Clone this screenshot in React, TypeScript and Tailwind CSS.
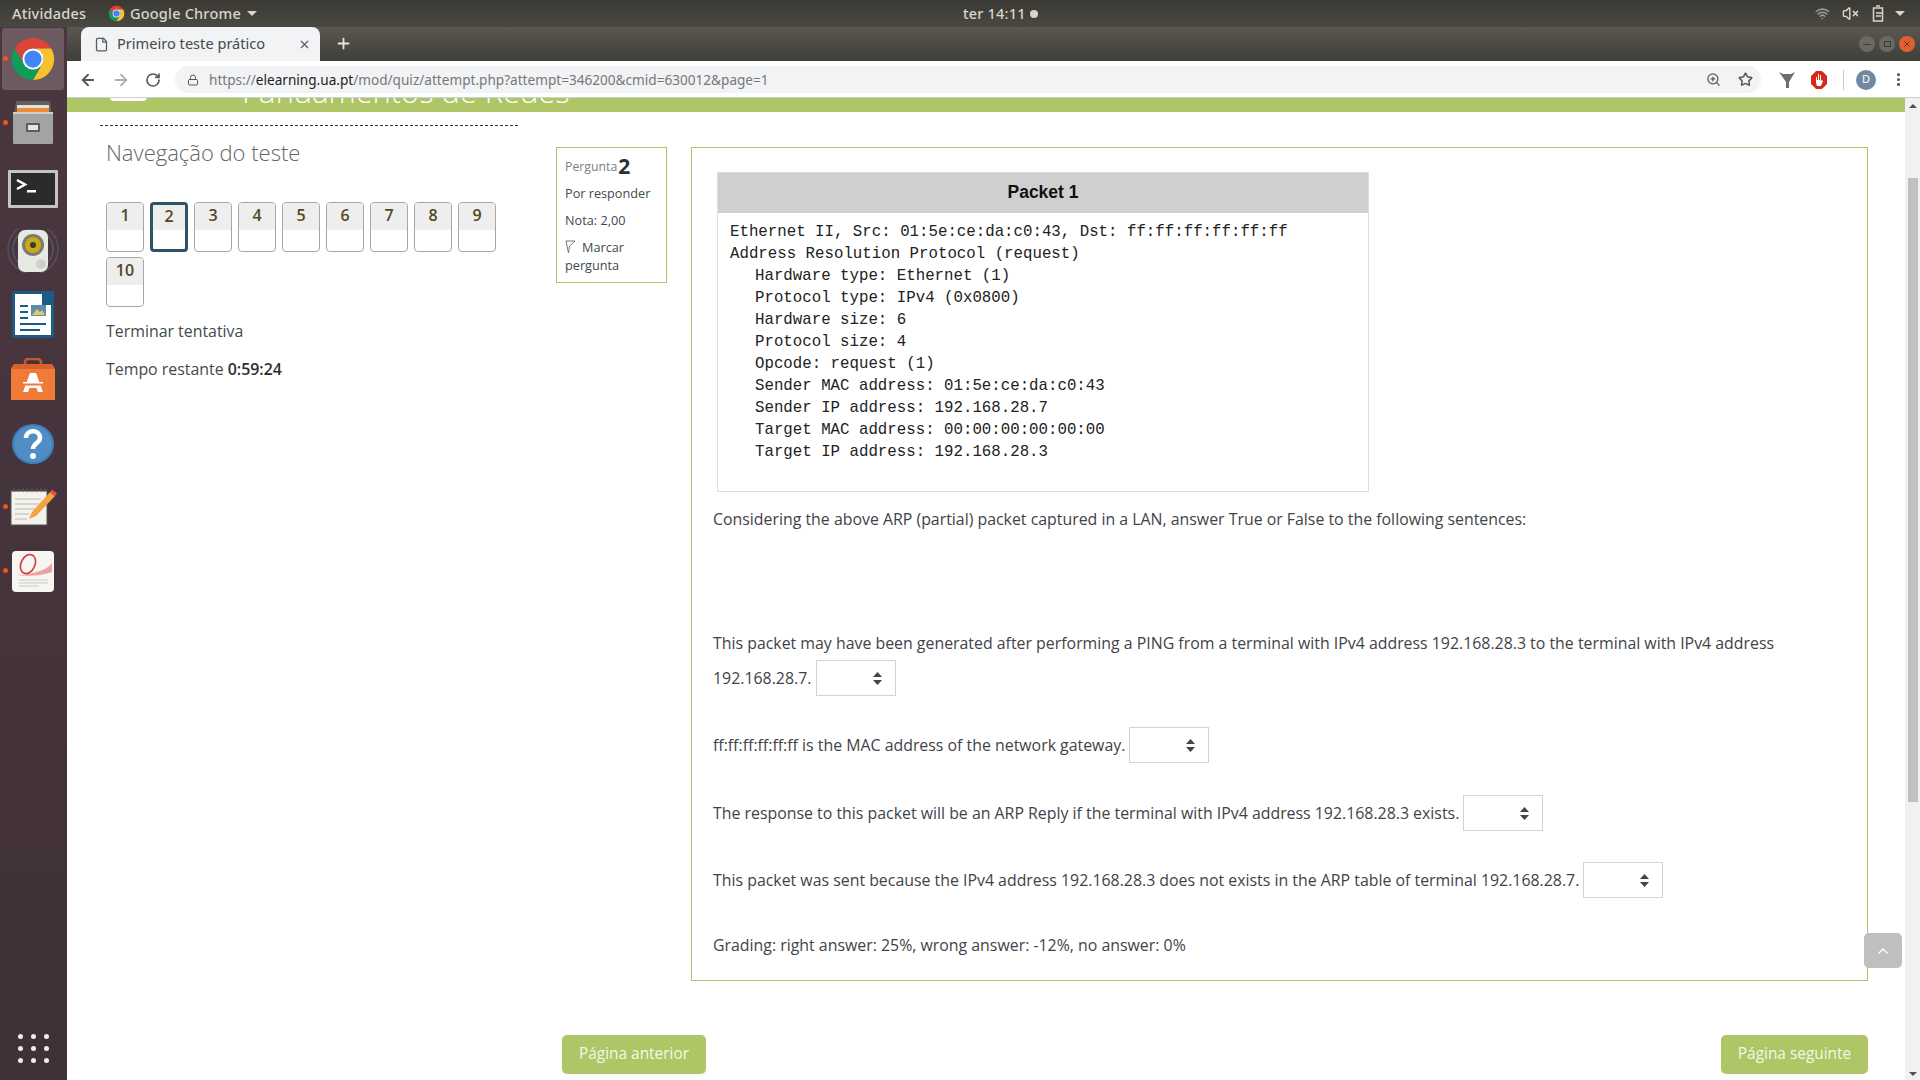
import { ArrowLeft, ArrowRight, ChevronUp, File, Lock, MoreVertical, Plus, RotateCw, Star, VolumeX, Wifi, X, ZoomIn } from "lucide-react";

const packetLines = [
  { text: "Ethernet II, Src: 01:5e:ce:da:c0:43, Dst: ff:ff:ff:ff:ff:ff", indent: false },
  { text: "Address Resolution Protocol (request)", indent: false },
  { text: "Hardware type: Ethernet (1)", indent: true },
  { text: "Protocol type: IPv4 (0x0800)", indent: true },
  { text: "Hardware size: 6", indent: true },
  { text: "Protocol size: 4", indent: true },
  { text: "Opcode: request (1)", indent: true },
  { text: "Sender MAC address: 01:5e:ce:da:c0:43", indent: true },
  { text: "Sender IP address: 192.168.28.7", indent: true },
  { text: "Target MAC address: 00:00:00:00:00:00", indent: true },
  { text: "Target IP address: 192.168.28.3", indent: true },
];

const ChromeLogo = ({ size }: { size: number }) => (
  <svg width={size} height={size} viewBox="0 0 48 48">
    <path fill="#DB4437" d="M4.95 13A22 22 0 0 1 43.05 13H24A11 11 0 0 0 14.47 29.5Z" />
    <path fill="#FBC02D" d="M43.05 13A22 22 0 0 1 24 46L33.5 29.5A11 11 0 0 0 24 13Z" />
    <path fill="#0F9D58" d="M24 46A22 22 0 0 1 4.95 13L14.47 29.5A11 11 0 0 0 33.5 29.5Z" />
    <circle cx="24" cy="24" r="11" fill="#fff" />
    <circle cx="24" cy="24" r="9" fill="#4285F4" />
  </svg>
);

const FilesIcon = () => (
  <svg width="44" height="44" viewBox="0 0 44 44">
    <path fill="#5f5f62" d="M5 0h34l2 14H3z" />
    <rect x="6" y="4" width="32" height="9" fill="#e9e2d2" />
    <rect x="6" y="7" width="32" height="4" fill="#ee8a3c" />
    <rect x="2" y="11" width="40" height="32" rx="1.5" fill="#a3a3a3" />
    <rect x="2" y="11" width="40" height="2" fill="#cfcfcf" />
    <rect x="15" y="22" width="14" height="9" rx="1" fill="#5c5c5c" />
    <rect x="17" y="24" width="10" height="5" fill="#e6e6e6" />
  </svg>
);

const TerminalIcon = () => (
  <svg width="50" height="38" viewBox="0 0 50 38">
    <rect width="50" height="38" rx="1" fill="#c4c4c0" />
    <rect x="3" y="3" width="44" height="32" fill="#2b2b2b" />
    <path d="M9 10l8 4.500-8 4.500" fill="none" stroke="#fff" strokeWidth="2.500" />
    <rect x="19" y="20" width="9" height="2.500" fill="#fff" />
  </svg>
);

const SpeakerIcon = () => (
  <svg width="52" height="44" viewBox="0 0 52 44">
    <circle cx="26" cy="20" r="25" fill="none" stroke="#5d6b85" strokeWidth="1.500" opacity="0.5" />
    <circle cx="26" cy="20" r="20" fill="none" stroke="#5d6b85" strokeWidth="1.500" opacity="0.6" />
    <rect x="11" y="1" width="30" height="42" rx="7" fill="#e9e9e4" />
    <circle cx="26" cy="16" r="11" fill="#7b7a72" />
    <circle cx="26" cy="16" r="8" fill="#c9a915" />
    <circle cx="26" cy="16" r="3" fill="#3b3a33" />
    <circle cx="34" cy="35" r="5" fill="#cfcfca" />
  </svg>
);

const WriterIcon = () => (
  <svg width="44" height="48" viewBox="0 0 44 48">
    <path fill="#1c5b86" d="M2 0h30l11 11v33a3 3 0 0 1-3 3H4a3 3 0 0 1-3-3V2z" />
    <path fill="#fff" d="M4 3h27v11h9v30H4z" />
    <path fill="#1c5b86" d="M31 0h12v11z" />
    <path stroke="#1c5b86" strokeWidth="2.200" d="M9 15h8M9 21h8M9 27h8M9 33h26M9 39h20" />
    <rect x="20" y="14" width="15" height="11" fill="#5b8db0" />
    <path fill="#e6c66a" d="M21 24l5-6 3 3 2-2 3 5z" />
  </svg>
);

const BagIcon = () => (
  <svg width="46" height="42" viewBox="0 0 46 42">
    <path d="M15 8V4a3 3 0 0 1 3-3h10a3 3 0 0 1 3 3v4" fill="none" stroke="#c8582a" strokeWidth="2.500" />
    <path fill="#f07a38" d="M4 6h38l3 5v31H1V11z" />
    <path fill="#d9622b" d="M1 11l3-5h38l3 5z" />
    <path fill="#fff" d="M20 15h6l7 19h-5l-1.500-4h-7L18 34h-5z" />
    <rect x="11" y="25" width="24" height="2.500" fill="#f07a38" />
    <rect x="13" y="24" width="20" height="1.500" fill="#fff" />
  </svg>
);

const HelpIcon = () => (
  <svg width="42" height="40" viewBox="0 0 42 40">
    <ellipse cx="21" cy="20" rx="21" ry="20" fill="#3f7fb9" />
    <ellipse cx="21" cy="20" rx="19" ry="18" fill="#4f8dc4" />
    <path d="M14 14c0-9 14-9 14 0 0 5-7 5-7 11" fill="none" stroke="#fff" strokeWidth="4.500" />
    <circle cx="21" cy="32" r="3" fill="#fff" />
  </svg>
);

const NotesIcon = () => (
  <svg width="48" height="40" viewBox="0 0 48 40">
    <rect x="2" y="4" width="36" height="34" fill="#f3f2ec" stroke="#55534f" strokeWidth="1" />
    <path stroke="#55534f" strokeWidth="3" strokeDasharray="2 2.500" d="M4 3h33" />
    <path stroke="#b9b7b0" strokeWidth="1.200" d="M6 12h26M6 17h24M6 22h20M6 27h14M6 32h12" />
    <path fill="#f3a33c" d="M41 5l5 4-19 20-7 3 3-7z" />
    <path fill="#d9534f" d="M41 5l2-2.500 5 4-2 2.500z" />
  </svg>
);

const EvinceIcon = () => (
  <svg width="42" height="41" viewBox="0 0 42 41">
    <rect width="42" height="41" rx="4" fill="#f6f5f2" />
    <path d="M4 24c10 0 30-3 36-12v9c-8 3-24 5-36 3z" fill="#eda3a3" />
    <ellipse cx="16" cy="13" rx="7" ry="10" fill="none" stroke="#d43a3a" strokeWidth="1.600" transform="rotate(25 16 13)" />
    <path stroke="#c9c9c6" strokeWidth="1.200" d="M7 29h29M7 32h29M7 35h20" />
  </svg>
);

const dockItems = [
  { icon: <ChromeLogo size={46} />, dot: true, active: true, shift: "" },
  { icon: <FilesIcon />, dot: true, active: false, shift: "" },
  { icon: <TerminalIcon />, dot: false, active: false, shift: "mt-[3px]" },
  { icon: <SpeakerIcon />, dot: false, active: false, shift: "" },
  { icon: <WriterIcon />, dot: false, active: false, shift: "" },
  { icon: <BagIcon />, dot: false, active: false, shift: "" },
  { icon: <HelpIcon />, dot: false, active: false, shift: "mt-[2px]" },
  { icon: <NotesIcon />, dot: true, active: false, shift: "" },
  { icon: <EvinceIcon />, dot: true, active: false, shift: "" },
];

const Dock = () => (
  <aside className="w-[67px] shrink-0 flex flex-col items-center bg-gradient-to-b from-[#4b3640] to-[#3f3136]">
    {dockItems.map((item, i) => (
      <div key={i} className="relative w-full h-[64px] pr-[1px] flex items-center justify-center">
        {item.active && <div className="absolute left-[2px] right-[3px] top-[1px] bottom-[1px] rounded-[3px] bg-[#6d5a60]" />}
        {item.dot && <div className="absolute left-[3px] top-[29px] w-[5px] h-[5px] rounded-full bg-[#e95420]" />}
        <div className={`relative ${item.shift}`}>{item.icon}</div>
      </div>
    ))}
    <div className="mt-auto mb-[17px] grid grid-cols-3 gap-x-[8px] gap-y-[7px]">
      {Array.from({ length: 9 }).map((_, i) => (
        <div key={i} className="w-[5px] h-[5px] rounded-full bg-[#eeeeee]" />
      ))}
    </div>
  </aside>
);

const TopBar = () => (
  <header className="h-[27px] shrink-0 flex items-center bg-gradient-to-b from-[#3a3934] to-[#4a4842] text-[#d8d5cd] text-[14.5px] font-medium tracking-[0.2px] font-['Noto_Sans',sans-serif]">
    <span className="ml-[12px] w-[96px]">Atividades</span>
    <ChromeLogo size={17} />
    <span className="ml-[5px]">Google Chrome</span>
    <span className="ml-[6px] w-0 h-0 border-x-[5px] border-x-transparent border-t-[5px] border-t-[#d8d5cd]" />
    <div className="ml-[706px] flex items-center gap-[4px]">
      <span>ter 14:11</span>
      <span className="w-[8px] h-[8px] rounded-full bg-[#d8d5cd]" />
    </div>
    <div className="ml-auto mr-[15px] flex items-center gap-[12px]">
      <Wifi size={15} strokeWidth={2.500} className="text-[#9b9a94]" />
      <VolumeX size={17} className="text-[#d8d5cd]" />
      <svg className="ml-[1px]" width="14" height="17" viewBox="0 0 14 17" fill="none" stroke="#d8d5cd" strokeWidth="1.500">
        <path d="M4 1h4M1.500 3h9v13h-9z" />
        <path d="M4 8h6M4 11h5" />
      </svg>
      <span className="ml-[-3px] w-0 h-0 border-x-[5px] border-x-transparent border-t-[5px] border-t-[#d8d5cd]" />
    </div>
  </header>
);

const TabBar = () => (
  <div className="h-[34px] shrink-0 flex items-end bg-gradient-to-b from-[#5b5850] to-[#3f3e39] font-['Noto_Sans',sans-serif]">
    <div className="ml-[14px] w-[239px] h-[34px] flex items-center rounded-t-[8px] bg-[#f1f3f4] text-[#45494d] text-[14.6px]">
      <File size={15} className="ml-[13px] text-[#55585c]" />
      <span className="ml-[8px]">Primeiro teste prático</span>
      <X size={13} className="ml-auto mr-[9px] text-[#55585c]" />
    </div>
    <Plus size={17} strokeWidth={2.500} className="ml-[15px] mb-[9px] text-[#e8e6e0]" />
    <div className="ml-auto mr-[5px] mb-[9px] flex items-center gap-[4px]">
      <span className="w-[16px] h-[16px] rounded-full bg-[#6b6964] flex items-center justify-center">
        <span className="w-[8px] h-[1px] bg-[#3c3b37]" />
      </span>
      <span className="w-[16px] h-[16px] rounded-full bg-[#6b6964] flex items-center justify-center">
        <span className="w-[7px] h-[6px] border border-[#3c3b37]" />
      </span>
      <span className="w-[16px] h-[16px] rounded-full bg-[#e0602e] flex items-center justify-center">
        <X size={10} className="text-[#5a2a14]" />
      </span>
    </div>
  </div>
);

const Toolbar = () => (
  <div className="h-[37px] shrink-0 flex items-center pt-[1px] bg-[#ffffff] border-b border-[#d0d0d0] font-['Noto_Sans',sans-serif]">
    <ArrowLeft size={18} strokeWidth={2.500} className="ml-[12px] text-[#55585c]" />
    <ArrowRight size={18} strokeWidth={2.500} className="ml-[15px] text-[#aeb0b3]" />
    <RotateCw size={16} strokeWidth={2.500} className="ml-[15px] text-[#55585c]" />
    <div className="ml-[14px] w-[1586px] h-[27px] flex items-center rounded-full bg-[#f1f3f4] text-[13.6px] text-[#75787c]">
      <Lock size={12} className="ml-[12px] text-[#55585c]" />
      <span className="ml-[10px] pt-[2px]">
        https://<span className="text-[#202124]">elearning.ua.pt</span>/mod/quiz/attempt.php?attempt=346200&amp;cmid=630012&amp;page=1
      </span>
      <ZoomIn size={15} className="ml-auto text-[#55585c]" />
      <Star size={15} strokeWidth={2.500} className="ml-[17px] mr-[8px] text-[#55585c]" />
    </div>
    <svg className="ml-[18px]" width="16" height="18" viewBox="0 0 16 18">
      <path fill="#6b6e72" d="M0 1l4 2h8l4-2-6 10v6H7v-6z" />
    </svg>
    <svg className="ml-[16px]" width="16" height="18" viewBox="0 0 16 18">
      <path fill="#d32a1a" d="M5 0h6l5 5v8l-5 5H5l-5-5V5z" />
      <path fill="#fff" d="M5 6h1v3h1V3h1v6h1V4h1v6l1-1 1 1-2 5H6l-1-3z" />
    </svg>
    <div className="ml-[16px] w-[1px] h-[20px] bg-[#c8c8c8]" />
    <div className="ml-[12px] w-[20px] h-[20px] rounded-full bg-[#6f8aa0] flex items-center justify-center text-[11px] text-white">D</div>
    <MoreVertical size={17} strokeWidth={2.500} className="ml-[14px] text-[#55585c]" />
  </div>
);

const SelectBox = () => (
  <span className="relative inline-block align-[-12px] w-[80px] h-[36px] bg-white border border-[#ced4da]">
    <svg className="absolute right-[13px] top-[11px]" width="9" height="13" viewBox="0 0 9 13">
      <path fill="#444" d="M4.500 0L9 5H0zM4.500 13L0 8h9z" />
    </svg>
  </span>
);

const PacketFigure = () => (
  <div className="ml-[4px] w-[652px] h-[320px] border border-[#dddddd]">
    <div className="h-[40px] pb-[2px] bg-[#cfcfcf] flex items-center justify-center text-[17.5px] font-bold text-[#111] font-['Liberation_Sans',sans-serif]">Packet 1</div>
    <div className="pt-[8px] pl-[12px] text-[15.75px] leading-[22px] text-[#222] font-['Liberation_Mono',monospace]">
      {packetLines.map((line) => (
        <div key={line.text} className={line.indent ? "pl-[25px]" : ""}>{line.text}</div>
      ))}
    </div>
  </div>
);

const QuizNav = () => (
  <div className="w-[489px] shrink-0 pl-[33px]">
    <div className="w-[418px] border-t border-dashed border-[#333] mt-[13px]" />
    <h2 className="ml-[6px] mt-[10px] text-[22px] leading-[32px] font-light text-[#5f6668]">Navegação do teste</h2>
    <div className="ml-[6px] mt-[34px] w-[400px] flex flex-wrap gap-x-[6px] gap-y-[5px]">
      {Array.from({ length: 10 }).map((_, i) => (
        <div
          key={i}
          className={`w-[38px] h-[50px] rounded-[4px] overflow-hidden bg-white ${i === 1 ? "border-[3px] border-[#2e5266]" : "border border-[#a6a6a6]"}`}
        >
          <div className={`bg-[#eeeeee] text-center font-semibold text-[16px] text-[#51491f] ${i === 1 ? "h-[25px] leading-[23px]" : "h-[27px] leading-[25px]"}`}>{i + 1}</div>
        </div>
      ))}
    </div>
    <div className="ml-[6px] mt-[12px] text-[15.9px] leading-[24px] text-[#3f4a4f]">Terminar tentativa</div>
    <div className="ml-[6px] mt-[14px] text-[15.9px] leading-[24px] text-[#3f4a4f]">
      Tempo restante <span className="font-semibold text-[#2b2f33]">0:59:24</span>
    </div>
  </div>
);

const QuestionInfo = () => (
  <div className="w-[111px] h-[136px] shrink-0 border border-[#aec665] pl-[8px] text-[12.7px] text-[#3f4a4f]">
    <div className="h-[37px] flex items-center">
      <span className="pt-[2px] text-[12.3px] text-[#7c7f80]">Pergunta</span>
      <span className="ml-[1px] text-[21px] font-bold text-[#2b2f33]">2</span>
    </div>
    <div className="leading-[18px] mt-[-1px]">Por responder</div>
    <div className="leading-[18px] mt-[9px]">Nota: 2,00</div>
    <div className="leading-[18px] mt-[9px] flex items-center">
      <svg width="11" height="14" viewBox="0 0 11 14" fill="none" stroke="#777" strokeWidth="1">
        <path d="M1 1h9L4.500 6 3.500 13z" />
      </svg>
      <span className="ml-[6px]">Marcar</span>
    </div>
    <div className="leading-[18px]">pergunta</div>
  </div>
);

const QuestionBody = () => (
  <div className="relative w-[1177px] h-[834px] shrink-0 border border-[#aec665] pt-[24px] pl-[21px] text-[15.88px] text-[#3f4347]">
    <PacketFigure />
    <p className="mt-[10px] leading-[34px]">Considering the above ARP (partial) packet captured in a LAN, answer True or False to the following sentences:</p>
    <p className="mt-[90px] leading-[34px]">
      This packet may have been generated after performing a PING from a terminal with IPv4 address 192.168.28.3 to the terminal with IPv4 address 192.168.28.7. <SelectBox />
    </p>
    <p className="mt-[31px] leading-[34px]">
      ff:ff:ff:ff:ff:ff is the MAC address of the network gateway. <SelectBox />
    </p>
    <p className="mt-[32px] leading-[34px]">
      The response to this packet will be an ARP Reply if the terminal with IPv4 address 192.168.28.3 exists. <SelectBox />
    </p>
    <p className="mt-[31px] leading-[34px]">
      This packet was sent because the IPv4 address 192.168.28.3 does not exists in the ARP table of terminal 192.168.28.7. <SelectBox />
    </p>
    <p className="mt-[30px] leading-[34px]">Grading: right answer: 25%, wrong answer: -12%, no answer: 0%</p>
    <button className="absolute right-[-35px] top-[785px] w-[38px] h-[35px] rounded-[5px] bg-[#bfbfbf] flex items-center justify-center">
      <ChevronUp size={16} className="text-white" />
    </button>
  </div>
);

const Scrollbar = () => (
  <div className="w-[15px] shrink-0 flex flex-col items-center bg-[#f1f1f1]">
    <div className="mt-[6px] w-0 h-0 border-x-[4px] border-x-transparent border-b-[4px] border-b-[#505050]" />
    <div className="mt-[70px] w-[10px] h-[624px] bg-[#c1c1c1]" />
    <div className="mt-auto mb-[4px] w-0 h-0 border-x-[4px] border-x-transparent border-t-[4px] border-t-[#505050]" />
  </div>
);

export default function App() {
  return (
    <div className="w-[1920px] h-[1080px] overflow-hidden flex flex-col bg-white font-['Open_Sans',sans-serif]">
      <TopBar />
      <div className="flex-1 min-h-0 flex">
        <Dock />
        <div className="flex-1 min-w-0 flex flex-col">
          <TabBar />
          <Toolbar />
          <div className="flex-1 min-h-0 flex">
            <main className="flex-1 min-w-0 flex flex-col">
              <div className="h-[14px] shrink-0 bg-[#aec665] overflow-hidden flex">
                <div className="ml-[43px] mt-[-3px] w-[37px] h-[6px] rounded-b-[4px] bg-white" />
                <div className="ml-[95px] mt-[-29px] text-[30.8px] leading-[44px] font-light text-white whitespace-nowrap">Fundamentos de Redes</div>
              </div>
              <div className="flex">
                <QuizNav />
                <div className="pt-[35px] flex">
                  <QuestionInfo />
                  <div className="ml-[24px]">
                    <QuestionBody />
                  </div>
                </div>
              </div>
              <div className="mt-[54px] ml-[495px] w-[1306px] flex justify-between text-[15.4px] text-[#f4f7e8]">
                <button className="w-[144px] h-[39px] pb-[2px] rounded-[5px] bg-[#aec665]">Página anterior</button>
                <button className="w-[147px] h-[39px] pb-[2px] rounded-[5px] bg-[#aec665]">Página seguinte</button>
              </div>
            </main>
            <Scrollbar />
          </div>
        </div>
      </div>
    </div>
  );
}
